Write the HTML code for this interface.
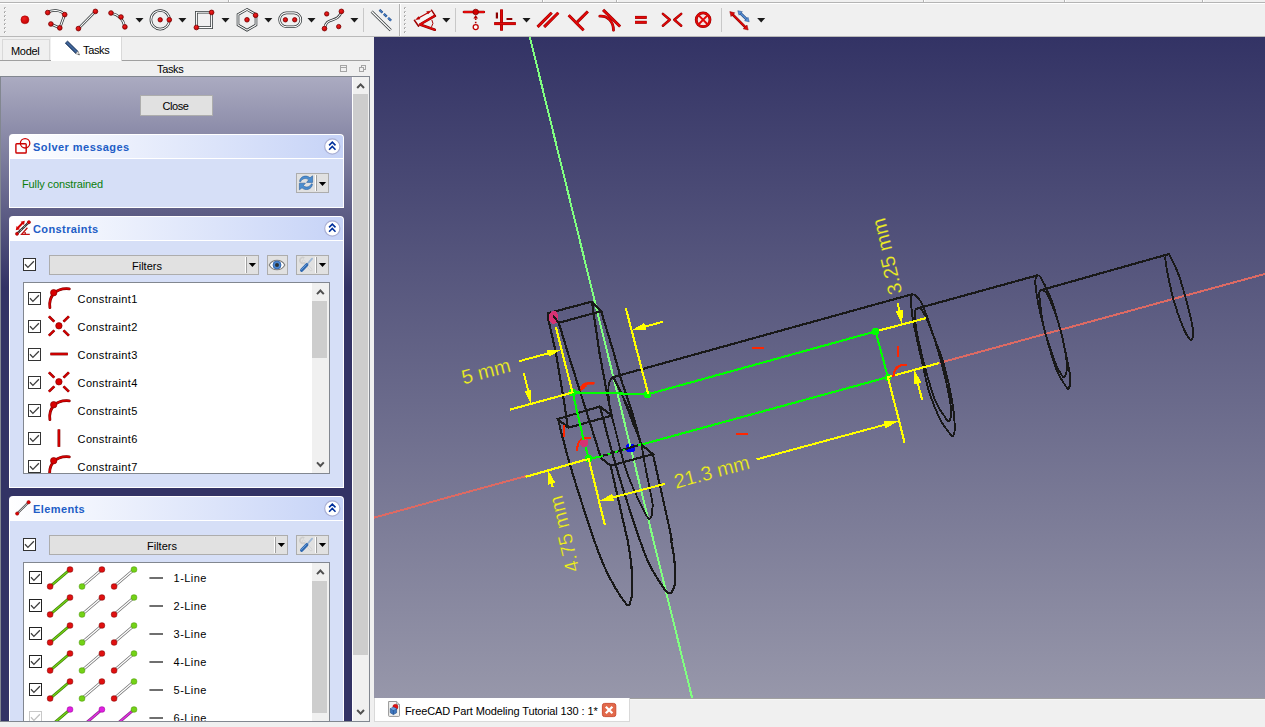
<!DOCTYPE html>
<html>
<head>
<meta charset="utf-8">
<title>FreeCAD</title>
<style>
html,body{margin:0;padding:0;}
body{width:1265px;height:727px;overflow:hidden;background:#f0f0f0;font-family:"Liberation Sans",sans-serif;font-size:11px;color:#000;position:relative;}
.abs{position:absolute;}
.t{position:absolute;white-space:nowrap;line-height:13px;height:13px;}
/* top frame lines */
#topg{left:0;top:2px;width:1265px;height:1px;background:#b4b4b4;}
#topw{left:0;top:3px;width:1265px;height:1px;background:#ffffff;}
.vs{position:absolute;top:0;width:1px;height:2px;background:#b4b4b4;}
.vw{position:absolute;top:0;width:1px;height:2px;background:#ffffff;}
#tbbot{left:0;top:36px;width:1265px;height:1px;background:#b9b9b9;}
/* task panel */
#taskbg{left:1px;top:77px;width:351px;height:644px;background:linear-gradient(to bottom,#ababc1 0px,#333365 210px,#333365 100%);}
.grp{position:absolute;left:9px;width:335px;}
.ghead{position:absolute;left:0;top:0;width:333px;height:23px;border:1px solid #fff;border-bottom:none;border-radius:4px 4px 0 0;background:linear-gradient(to right,#ffffff,#c6d3f7);}
.gcont{position:absolute;left:0;top:24px;width:333px;border:1px solid #fff;background:#d6dff7;}
.gtitle{position:absolute;left:24px;top:7px;font-weight:bold;color:#215dc6;font-size:11px;line-height:13px;white-space:nowrap;}
.btn{position:absolute;background:#e1e1e1;border:1px solid #adadad;box-sizing:border-box;}
.cb{position:absolute;width:13px;height:13px;box-sizing:border-box;border:1px solid #333;background:#fff;}
.list{position:absolute;background:#fff;border:1px solid #828790;box-sizing:border-box;overflow:hidden;}
</style>
</head>
<body>
<!-- top frame -->
<div id="topg" class="abs"></div><div id="topw" class="abs"></div>
<div class="vs" style="left:228px"></div><div class="vw" style="left:229px"></div>
<div class="vs" style="left:542px"></div><div class="vw" style="left:543px"></div>
<div class="vs" style="left:616px"></div><div class="vw" style="left:617px"></div>
<div class="vs" style="left:923px"></div><div class="vw" style="left:924px"></div>
<div class="vs" style="left:1064px"></div><div class="vw" style="left:1065px"></div>
<div class="vs" style="left:1202px"></div><div class="vw" style="left:1203px"></div>
<div id="tbbot" class="abs"></div>

<!-- TOOLBAR -->
<svg id="toolbar" class="abs" style="left:0;top:0" width="800" height="37" viewBox="0 0 800 37">
<defs><radialGradient id="rg" cx="0.4" cy="0.35" r="0.7"><stop offset="0" stop-color="#f02020"/><stop offset="1" stop-color="#c00000"/></radialGradient></defs><rect x="4" y="7" width="2" height="2" fill="#c0c0c0"/><rect x="5" y="8" width="1" height="1" fill="#ffffff"/><rect x="4" y="8" width="1" height="1" fill="#a0a0a0"/><rect x="4" y="11" width="2" height="2" fill="#c0c0c0"/><rect x="5" y="12" width="1" height="1" fill="#ffffff"/><rect x="4" y="12" width="1" height="1" fill="#a0a0a0"/><rect x="4" y="15" width="2" height="2" fill="#c0c0c0"/><rect x="5" y="16" width="1" height="1" fill="#ffffff"/><rect x="4" y="16" width="1" height="1" fill="#a0a0a0"/><rect x="4" y="19" width="2" height="2" fill="#c0c0c0"/><rect x="5" y="20" width="1" height="1" fill="#ffffff"/><rect x="4" y="20" width="1" height="1" fill="#a0a0a0"/><rect x="4" y="23" width="2" height="2" fill="#c0c0c0"/><rect x="5" y="24" width="1" height="1" fill="#ffffff"/><rect x="4" y="24" width="1" height="1" fill="#a0a0a0"/><rect x="4" y="27" width="2" height="2" fill="#c0c0c0"/><rect x="5" y="28" width="1" height="1" fill="#ffffff"/><rect x="4" y="28" width="1" height="1" fill="#a0a0a0"/><rect x="4" y="31" width="2" height="2" fill="#c0c0c0"/><rect x="5" y="32" width="1" height="1" fill="#ffffff"/><rect x="4" y="32" width="1" height="1" fill="#a0a0a0"/><circle cx="24.9" cy="19.8" r="4" fill="url(#rg)" stroke="#a00000" stroke-width="0.5"/><path d="M47.7 12.6 C52 9.5 60 9.5 64.7 14.6 L59.8 27.9 L50.9 24" fill="none" stroke="#2e3436" stroke-width="2.6" stroke-linecap="butt"/><path d="M47.7 12.6 C52 9.5 60 9.5 64.7 14.6 L59.8 27.9 L50.9 24" fill="none" stroke="#ffffff" stroke-width="1.1"/><circle cx="47.7" cy="12.6" r="2.35" fill="url(#rg)" stroke="#7a0000" stroke-width="0.8"/><circle cx="64.7" cy="14.6" r="2.35" fill="url(#rg)" stroke="#7a0000" stroke-width="0.8"/><circle cx="50.9" cy="24" r="2.35" fill="url(#rg)" stroke="#7a0000" stroke-width="0.8"/><circle cx="59.8" cy="27.9" r="2.35" fill="url(#rg)" stroke="#7a0000" stroke-width="0.8"/><path d="M78.4 28.6 L95.4 11.4" fill="none" stroke="#2e3436" stroke-width="2.6" stroke-linecap="butt"/><path d="M78.4 28.6 L95.4 11.4" fill="none" stroke="#ffffff" stroke-width="1.1"/><circle cx="78.4" cy="28.6" r="2.35" fill="url(#rg)" stroke="#7a0000" stroke-width="0.8"/><circle cx="95.4" cy="11.4" r="2.35" fill="url(#rg)" stroke="#7a0000" stroke-width="0.8"/><path d="M111 13 Q122.5 15.5 124.9 26.9" fill="none" stroke="#2e3436" stroke-width="2.6" stroke-linecap="butt"/><path d="M111 13 Q122.5 15.5 124.9 26.9" fill="none" stroke="#ffffff" stroke-width="1.1"/><circle cx="111" cy="13" r="2.35" fill="url(#rg)" stroke="#7a0000" stroke-width="0.8"/><circle cx="121" cy="17" r="2.35" fill="url(#rg)" stroke="#7a0000" stroke-width="0.8"/><circle cx="124.9" cy="26.9" r="2.35" fill="url(#rg)" stroke="#7a0000" stroke-width="0.8"/><path d="M135.5 18 L143.5 18 L139.5 22.4 Z" fill="#1a1a1a"/><circle cx="160.2" cy="19.8" r="9.3" fill="none" stroke="#2e3436" stroke-width="2.6"/><circle cx="160.2" cy="19.8" r="9.3" fill="none" stroke="#fff" stroke-width="1.1"/><circle cx="160.2" cy="19.8" r="2.2" fill="url(#rg)" stroke="#7a0000" stroke-width="0.8"/><circle cx="169.3" cy="19.8" r="2.35" fill="url(#rg)" stroke="#7a0000" stroke-width="0.8"/><path d="M178.4 18 L186.4 18 L182.4 22.4 Z" fill="#1a1a1a"/><path d="M196.4 12.3 L211.6 12.3 L211.6 27.6 L196.4 27.6 Z" fill="none" stroke="#2e3436" stroke-width="2.6" stroke-linecap="butt"/><path d="M196.4 12.3 L211.6 12.3 L211.6 27.6 L196.4 27.6 Z" fill="none" stroke="#ffffff" stroke-width="1.1"/><circle cx="211.6" cy="12.4" r="2.35" fill="url(#rg)" stroke="#7a0000" stroke-width="0.8"/><circle cx="196.4" cy="27.5" r="2.35" fill="url(#rg)" stroke="#7a0000" stroke-width="0.8"/><path d="M221.5 18 L229.5 18 L225.5 22.4 Z" fill="#1a1a1a"/><path d="M247.0 9.4 L256.0 14.6 L256.0 25.0 L247.0 30.2 L238.0 25.0 L238.0 14.6 Z" fill="none" stroke="#2e3436" stroke-width="2.6" stroke-linecap="butt"/><path d="M247.0 9.4 L256.0 14.6 L256.0 25.0 L247.0 30.2 L238.0 25.0 L238.0 14.6 Z" fill="none" stroke="#ffffff" stroke-width="1.1"/><circle cx="247" cy="19.8" r="2.3" fill="url(#rg)" stroke="#7a0000" stroke-width="0.8"/><circle cx="255.6" cy="15.3" r="2.35" fill="url(#rg)" stroke="#7a0000" stroke-width="0.8"/><path d="M264.4 18 L272.4 18 L268.4 22.4 Z" fill="#1a1a1a"/><rect x="279.6" y="12.9" width="21.2" height="13.8" rx="6.9" fill="none" stroke="#2e3436" stroke-width="2.6"/><rect x="279.6" y="12.9" width="21.2" height="13.8" rx="6.9" fill="none" stroke="#fff" stroke-width="1.1"/><circle cx="285.4" cy="19.8" r="2.2" fill="url(#rg)" stroke="#7a0000" stroke-width="0.8"/><circle cx="294.7" cy="19.8" r="2.2" fill="url(#rg)" stroke="#7a0000" stroke-width="0.8"/><path d="M307.5 18 L315.5 18 L311.5 22.4 Z" fill="#1a1a1a"/><path d="M324.5 28.6 C326 16 338 24 341.4 11.4" fill="none" stroke="#2e3436" stroke-width="2.6" stroke-linecap="butt"/><path d="M324.5 28.6 C326 16 338 24 341.4 11.4" fill="none" stroke="#ffffff" stroke-width="1.1"/><circle cx="326.7" cy="13.9" r="2.2" fill="url(#rg)" stroke="#7a0000" stroke-width="0.8"/><circle cx="341.4" cy="11.4" r="2.35" fill="url(#rg)" stroke="#7a0000" stroke-width="0.8"/><circle cx="324.5" cy="28.6" r="2.35" fill="url(#rg)" stroke="#7a0000" stroke-width="0.8"/><circle cx="338.7" cy="26.6" r="2.2" fill="url(#rg)" stroke="#7a0000" stroke-width="0.8"/><path d="M350.4 18 L358.4 18 L354.4 22.4 Z" fill="#1a1a1a"/><rect x="363" y="8" width="1" height="24" fill="#c8c8c8"/><path d="M371.6 11.5 L390.7 30.2" fill="none" stroke="#2e3436" stroke-width="2.8" stroke-linecap="butt"/><path d="M371.6 11.5 L390.7 30.2" fill="none" stroke="#ffffff" stroke-width="1.2999999999999998"/><path d="M379.5 9.9 L392.4 21.9" stroke="#204a87" stroke-width="2.4" stroke-dasharray="4 1.9" fill="none"/><path d="M379.5 9.9 L392.4 21.9" stroke="#4a82c8" stroke-width="1.2" stroke-dasharray="4 1.9" fill="none"/><rect x="399" y="4" width="1" height="32" fill="#b4b4b4"/><rect x="400" y="4" width="1" height="32" fill="#ffffff"/><rect x="404" y="7" width="2" height="2" fill="#c0c0c0"/><rect x="405" y="8" width="1" height="1" fill="#ffffff"/><rect x="404" y="8" width="1" height="1" fill="#a0a0a0"/><rect x="404" y="11" width="2" height="2" fill="#c0c0c0"/><rect x="405" y="12" width="1" height="1" fill="#ffffff"/><rect x="404" y="12" width="1" height="1" fill="#a0a0a0"/><rect x="404" y="15" width="2" height="2" fill="#c0c0c0"/><rect x="405" y="16" width="1" height="1" fill="#ffffff"/><rect x="404" y="16" width="1" height="1" fill="#a0a0a0"/><rect x="404" y="19" width="2" height="2" fill="#c0c0c0"/><rect x="405" y="20" width="1" height="1" fill="#ffffff"/><rect x="404" y="20" width="1" height="1" fill="#a0a0a0"/><rect x="404" y="23" width="2" height="2" fill="#c0c0c0"/><rect x="405" y="24" width="1" height="1" fill="#ffffff"/><rect x="404" y="24" width="1" height="1" fill="#a0a0a0"/><rect x="404" y="27" width="2" height="2" fill="#c0c0c0"/><rect x="405" y="28" width="1" height="1" fill="#ffffff"/><rect x="404" y="28" width="1" height="1" fill="#a0a0a0"/><rect x="404" y="31" width="2" height="2" fill="#c0c0c0"/><rect x="405" y="32" width="1" height="1" fill="#ffffff"/><rect x="404" y="32" width="1" height="1" fill="#a0a0a0"/><path d="M414.4 20.3 L431.5 10.2 L435.5 16.1 L418.6 26.2 Z" fill="#f8f4f4"/><path d="M414.4 20.3 L418.6 26.2 M431.5 10.2 L435.5 16.1" fill="none" stroke="#a00000" stroke-width="1.5" stroke-linecap="round"/><path d="M417.2 18.8 L429.4 11.9" stroke="#b80000" stroke-width="1.2"/><path d="M415.6 19.7 L418.6 16.6 L420 19.1 Z M431 11 L428 14.1 L426.6 11.6 Z" fill="#c80000" stroke="#a00000" stroke-width="0.4"/><path d="M431.8 19.8 Q434.2 23.4 431.5 26.9" fill="none" stroke="#a80000" stroke-width="1.0"/><path d="M434.4 16.1 L419.9 24.5 L434.8 29.7" fill="none" stroke="#8a0000" stroke-width="2.6" stroke-linecap="round" stroke-linejoin="round"/><path d="M434.4 16.1 L419.9 24.5 L434.8 29.7" fill="none" stroke="#e00808" stroke-width="1.7" stroke-linecap="round" stroke-linejoin="round"/><path d="M442.3 18 L450.3 18 L446.3 22.4 Z" fill="#1a1a1a"/><rect x="455" y="8" width="1" height="24" fill="#c8c8c8"/><path d="M464 12 L483.8 12" fill="none" stroke="#8a0000" stroke-width="2.7" stroke-linecap="round" stroke-linejoin="round"/><path d="M464 12 L483.8 12" fill="none" stroke="#e00808" stroke-width="1.8" stroke-linecap="round" stroke-linejoin="round"/><circle cx="475.7" cy="12" r="2.8" fill="#d40000" stroke="#7a0000" stroke-width="0.8"/><path d="M475.7 18.5 L475.7 24.2" stroke="#b00000" stroke-width="1.6" stroke-dasharray="1.6 1.6"/><path d="M473.4 18.4 L475.7 15 L478 18.4 Z" fill="#b00000"/><circle cx="475.7" cy="27.1" r="2.5" fill="#fff" stroke="#c00000" stroke-width="1.3"/><path d="M501.5 9.5 L501.5 30.6" fill="none" stroke="#8a0000" stroke-width="3.0" stroke-linecap="butt" stroke-linejoin="round"/><path d="M501.5 9.5 L501.5 30.6" fill="none" stroke="#e00808" stroke-width="2.1" stroke-linecap="butt" stroke-linejoin="round"/><path d="M494.2 23.6 L515.8 23.6" fill="none" stroke="#8a0000" stroke-width="3.0" stroke-linecap="butt" stroke-linejoin="round"/><path d="M494.2 23.6 L515.8 23.6" fill="none" stroke="#e00808" stroke-width="2.1" stroke-linecap="butt" stroke-linejoin="round"/><path d="M496.9 12.6 L496.9 18.6 M506.5 19 L512.3 19" stroke="#8c0000" stroke-width="2.2"/><path d="M522.5 18 L530.5 18 L526.5 22.4 Z" fill="#1a1a1a"/><path d="M537.6 26.9 L551.7 12.8" fill="none" stroke="#8a0000" stroke-width="3.0" stroke-linecap="butt" stroke-linejoin="round"/><path d="M537.6 26.9 L551.7 12.8" fill="none" stroke="#e00808" stroke-width="2.1" stroke-linecap="butt" stroke-linejoin="round"/><path d="M544.2 26.9 L558.3 12.8" fill="none" stroke="#8a0000" stroke-width="3.0" stroke-linecap="butt" stroke-linejoin="round"/><path d="M544.2 26.9 L558.3 12.8" fill="none" stroke="#e00808" stroke-width="2.1" stroke-linecap="butt" stroke-linejoin="round"/><path d="M568.7 15.3 L583.6 30.2" fill="none" stroke="#8a0000" stroke-width="3.0" stroke-linecap="butt" stroke-linejoin="round"/><path d="M568.7 15.3 L583.6 30.2" fill="none" stroke="#e00808" stroke-width="2.1" stroke-linecap="butt" stroke-linejoin="round"/><path d="M577.4 21.9 L587.8 11.5" fill="none" stroke="#8a0000" stroke-width="3.0" stroke-linecap="butt" stroke-linejoin="round"/><path d="M577.4 21.9 L587.8 11.5" fill="none" stroke="#e00808" stroke-width="2.1" stroke-linecap="butt" stroke-linejoin="round"/><path d="M599.8 16.1 C608 15.5 613.5 22 613.5 30.2" fill="none" stroke="#8a0000" stroke-width="2.8000000000000003" stroke-linecap="round" stroke-linejoin="round"/><path d="M599.8 16.1 C608 15.5 613.5 22 613.5 30.2" fill="none" stroke="#e00808" stroke-width="1.9000000000000001" stroke-linecap="round" stroke-linejoin="round"/><path d="M603.1 9.9 L620.1 26.5" fill="none" stroke="#8a0000" stroke-width="3.0" stroke-linecap="butt" stroke-linejoin="round"/><path d="M603.1 9.9 L620.1 26.5" fill="none" stroke="#e00808" stroke-width="2.1" stroke-linecap="butt" stroke-linejoin="round"/><path d="M635 17.4 L646.7 17.4" fill="none" stroke="#8a0000" stroke-width="3.0" stroke-linecap="butt" stroke-linejoin="round"/><path d="M635 17.4 L646.7 17.4" fill="none" stroke="#e00808" stroke-width="2.1" stroke-linecap="butt" stroke-linejoin="round"/><path d="M635 22.3 L646.7 22.3" fill="none" stroke="#8a0000" stroke-width="3.0" stroke-linecap="butt" stroke-linejoin="round"/><path d="M635 22.3 L646.7 22.3" fill="none" stroke="#e00808" stroke-width="2.1" stroke-linecap="butt" stroke-linejoin="round"/><path d="M662.9 13.9 L669.8 19.8 L662.9 25.7" fill="none" stroke="#8a0000" stroke-width="2.5" stroke-linecap="round" stroke-linejoin="round"/><path d="M662.9 13.9 L669.8 19.8 L662.9 25.7" fill="none" stroke="#e00808" stroke-width="1.5999999999999999" stroke-linecap="round" stroke-linejoin="round"/><path d="M681.2 13.9 L674.3 19.8 L681.2 25.7" fill="none" stroke="#8a0000" stroke-width="2.5" stroke-linecap="round" stroke-linejoin="round"/><path d="M681.2 13.9 L674.3 19.8 L681.2 25.7" fill="none" stroke="#e00808" stroke-width="1.5999999999999999" stroke-linecap="round" stroke-linejoin="round"/><circle cx="703.1" cy="19.8" r="6.9" fill="#f6e6e6" stroke="#8a0000" stroke-width="2.8"/><circle cx="703.1" cy="19.8" r="6.9" fill="none" stroke="#e00808" stroke-width="1.9"/><path d="M698.2 14.9 L708 24.7 M708 14.9 L698.2 24.7" stroke="#e00808" stroke-width="2"/><rect x="721" y="8" width="1" height="24" fill="#c8c8c8"/><path d="M732 13.8 L746 27.8" stroke="#8a0000" stroke-width="2.6" /><path d="M732 13.8 L746 27.8" stroke="#e00808" stroke-width="1.5"/><path d="M729.8 11.6 L734.8 12.8 L731 16.6 Z M748.2 30 L743.2 28.8 L747 25 Z" fill="#e00808" stroke="#8a0000" stroke-width="0.5"/><path d="M739.6 12.5 L747.4 20" stroke="#204a87" stroke-width="2.6"/><path d="M739.6 12.5 L747.4 20" stroke="#5a92d6" stroke-width="1.4"/><path d="M737.8 10.7 L742.4 11.7 L739 15.2 Z M749.2 21.8 L744.6 20.8 L748 17.3 Z" fill="#5a92d6" stroke="#204a87" stroke-width="0.5"/><path d="M757.2 18 L765.2 18 L761.2 22.4 Z" fill="#1a1a1a"/>
</svg>

<!-- LEFT DOCK -->

<!-- tab bar -->
<div class="abs" style="left:0;top:60px;width:370px;height:1px;background:#a0a0a0;"></div>
<div class="abs" style="left:2px;top:39px;width:48px;height:21px;border:1px solid #d9d9d9;border-bottom:none;box-sizing:border-box;background:#f0f0f0;"></div>
<div class="abs" style="left:51px;top:37px;width:71px;height:24px;background:#fff;border-right:1px solid #d9d9d9;box-sizing:border-box;"></div>
<div class="t" id="tModel" style="left:11px;top:45px;letter-spacing:-0.3px;">Model</div>
<div class="t" id="tTasks1" style="left:83px;top:44px;letter-spacing:-0.35px;">Tasks</div>
<svg class="abs" style="left:63px;top:40px" width="18" height="17" viewBox="63 40 18 17">
 <path d="M65.2 43.2 L67.6 41 L78 51.2 L75.6 53.6 Z" fill="#2b4c7e" stroke="#1d3557" stroke-width="0.6"/>
 <path d="M66.6 42.2 L77 52.4" stroke="#5c86bd" stroke-width="0.9" fill="none"/>
 <path d="M75.6 53.6 L78 51.2 L79.6 55 Z" fill="#e8e8e8" stroke="#555" stroke-width="0.5"/>
 <path d="M78.6 53.8 L79.6 55 L78.2 54.6 Z" fill="#222"/>
</svg>
<!-- dock title -->
<div class="t" id="tTasks2" style="left:157px;top:63px;letter-spacing:-0.35px;">Tasks</div>
<svg class="abs" style="left:336px;top:63px" width="34" height="12" viewBox="336 63 34 12">
 <rect x="340.5" y="65.5" width="6" height="6" fill="none" stroke="#a4a4a4" stroke-width="1"/>
 <line x1="340" y1="67.5" x2="347" y2="67.5" stroke="#a4a4a4"/>
 <rect x="361.5" y="65.5" width="4" height="4" fill="#f0f0f0" stroke="#a4a4a4"/>
 <rect x="359.5" y="67.5" width="4" height="4" fill="#f0f0f0" stroke="#a4a4a4"/>
</svg>
<!-- scroll area -->
<div class="abs" style="left:0;top:76px;width:370px;height:646px;background:#828790;"></div>
<div id="taskbg" class="abs"></div>
<!-- main scrollbar -->
<div class="abs" style="left:352px;top:77px;width:17px;height:644px;background:#f0f0f0;"></div><div class="abs" style="left:352px;top:77px;width:1px;height:644px;background:#fff;"></div>
<div class="abs" style="left:353px;top:94px;width:15px;height:561px;background:#cdcdcd;"></div>
<svg class="abs" style="left:352px;top:77px" width="18" height="644" viewBox="352 77 18 644">
 <path d="M357.2 88 L360.6 84.4 L364 88" fill="none" stroke="#505050" stroke-width="2"/>
 <path d="M357.2 710 L360.6 713.6 L364 710" fill="none" stroke="#505050" stroke-width="2"/>
</svg>

<!-- clip for task content -->
<div class="abs" style="left:1px;top:77px;width:351px;height:644px;overflow:hidden;">
<div class="abs" style="left:-1px;top:-77px;width:352px;height:800px;">

<!-- Solver messages -->
<div class="grp" style="top:134px;height:74px;">
 <div class="ghead"></div>
 <div class="gcont" style="height:48px;"></div>
 <div class="gtitle" id="gt1" style="letter-spacing:0.45px;">Solver messages</div>
</div>
<div class="t" id="tFully" style="left:22px;top:178px;color:#0a7d0a;letter-spacing:-0.12px;">Fully constrained</div>
<div class="btn" style="left:296px;top:173px;width:33px;height:20px;"></div>

<!-- Constraints -->
<div class="grp" style="top:216px;height:272px;">
 <div class="ghead"></div>
 <div class="gcont" style="height:246px;"></div>
 <div class="gtitle" id="gt2" style="letter-spacing:0.4px;">Constraints</div>
</div>
<div class="cb" style="left:23px;top:258px;"></div>
<div class="btn" style="left:49px;top:255px;width:210px;height:20px;"></div>
<div class="t" id="tFil1" style="left:132px;top:260px;">Filters</div>
<div class="btn" style="left:267px;top:255px;width:21px;height:20px;"></div>
<div class="btn" style="left:296px;top:255px;width:33px;height:20px;"></div>
<div class="list" id="clist" style="left:23px;top:282px;width:307px;height:192px;">
 <div class="abs" style="left:288px;top:0;width:17px;height:190px;background:#f0f0f0;"></div>
 <div class="abs" style="left:288px;top:18px;width:15px;height:57px;background:#cdcdcd;"></div>
</div>

<!-- Elements -->
<div class="grp" style="top:496px;height:272px;">
 <div class="ghead"></div>
 <div class="gcont" style="height:246px;"></div>
 <div class="gtitle" id="gt3" style="letter-spacing:0.4px;">Elements</div>
</div>
<div class="cb" style="left:23px;top:538px;"></div>
<div class="btn" style="left:49px;top:535px;width:239px;height:20px;"></div>
<div class="t" id="tFil2" style="left:147px;top:540px;">Filters</div>
<div class="btn" style="left:296px;top:535px;width:33px;height:20px;"></div>
<div class="list" id="elist" style="left:23px;top:562px;width:307px;height:192px;">
 <div class="abs" style="left:288px;top:0;width:17px;height:190px;background:#f0f0f0;"></div>
 <div class="abs" style="left:288px;top:18px;width:15px;height:132px;background:#cdcdcd;"></div>
</div>

<!-- PANEL_ITEMS -->

<svg id="pnl" class="abs" style="left:0;top:0" width="352" height="727" viewBox="0 0 352 727">
<rect x="15.9" y="143.8" width="10.3" height="9.2" rx="0.8" fill="none" stroke="#cc0000" stroke-width="1.4"/><circle cx="25.1" cy="143.3" r="4.7" fill="none" stroke="#cc0000" stroke-width="1.3"/><circle cx="332.3" cy="146.5" r="7.6" fill="#ffffff" stroke="#aab0d4" stroke-width="1.2"/><path d="M329.1 145.4 L332.3 142.2 L335.5 145.4 M329.1 149.7 L332.3 146.5 L335.5 149.7" fill="none" stroke="#00309c" stroke-width="1.6"/><circle cx="332.3" cy="228.5" r="7.6" fill="#ffffff" stroke="#aab0d4" stroke-width="1.2"/><path d="M329.1 227.4 L332.3 224.2 L335.5 227.4 M329.1 231.7 L332.3 228.5 L335.5 231.7" fill="none" stroke="#00309c" stroke-width="1.6"/><circle cx="332.3" cy="508.5" r="7.6" fill="#ffffff" stroke="#aab0d4" stroke-width="1.2"/><path d="M329.1 507.4 L332.3 504.2 L335.5 507.4 M329.1 511.7 L332.3 508.5 L335.5 511.7" fill="none" stroke="#00309c" stroke-width="1.6"/><g transform="translate(299,175)"><path d="M0.6 6.6 C0.8 1.2 7.5 -0.6 11 2.8 L13.6 0.8 L13.6 7.4 L7.6 7.4 L9.6 5 C7.6 2.6 3.2 3.2 1.6 6.8 Z" fill="#4b8dd0" stroke="#2c5f9c" stroke-width="0.6"/><path d="M13.4 9 C13.2 14.4 6.5 16.2 3 12.8 L0.4 14.8 L0.4 8.2 L6.4 8.2 L4.4 10.6 C6.4 13 10.8 12.4 12.4 8.8 Z" fill="#4b8dd0" stroke="#2c5f9c" stroke-width="0.6"/></g><rect x="315" y="175" width="1" height="16" fill="#ffffff"/><rect x="316" y="175" width="1" height="16" fill="#a0a0a0"/><path d="M318.9 182 L326.1 182 L322.5 186 Z" fill="#000"/><path d="M17 233.8 L28.9 222.2" stroke="#222" stroke-width="2.2"/><path d="M17 233.8 L28.9 222.2" stroke="#fff" stroke-width="0.9" stroke-dasharray="1 1"/><circle cx="17" cy="233.8" r="1.6" fill="#e00000" stroke="#8a0000" stroke-width="0.5"/><circle cx="28.9" cy="222.2" r="1.6" fill="#e00000" stroke="#8a0000" stroke-width="0.5"/><path d="M17.8 228 L22.8 222.8" stroke="#d40000" stroke-width="2"/><path d="M15.8 230.2 L16.6 226 L20 229.2 Z M24.8 220.8 L24 225 L20.6 221.8 Z" fill="#d40000"/><path d="M29.8 234.3 L21.6 234.3 L27.4 227.8 M25.2 234 Q25.6 231.6 24 231.4" fill="none" stroke="#c01010" stroke-width="1.3"/><path d="M17.2 513.6 L28.6 502.2" stroke="#444" stroke-width="2.1"/><path d="M17.2 513.6 L28.6 502.2" stroke="#fff" stroke-width="0.8"/><circle cx="17.2" cy="513.6" r="1.7" fill="#e00000" stroke="#8a0000" stroke-width="0.5"/><circle cx="28.6" cy="502.2" r="1.7" fill="#e00000" stroke="#8a0000" stroke-width="0.5"/><path d="M25.0 264.3 L27.9 267.4 L33.9 261.3" fill="none" stroke="#3c3c3c" stroke-width="1.3"/><path d="M25.0 544.3 L27.9 547.4 L33.9 541.3" fill="none" stroke="#3c3c3c" stroke-width="1.3"/><rect x="245" y="257" width="1" height="16" fill="#ffffff"/><rect x="246" y="257" width="1" height="16" fill="#a0a0a0"/><path d="M248.8 263 L256.0 263 L252.4 267 Z" fill="#000"/><rect x="274" y="537" width="1" height="16" fill="#ffffff"/><rect x="275" y="537" width="1" height="16" fill="#a0a0a0"/><path d="M277.79999999999995 543 L285.0 543 L281.4 547 Z" fill="#000"/><path d="M269.2 265 C272.6 258.6 281.4 258.6 284.8 265 C281.4 271.4 272.6 271.4 269.2 265 Z" fill="#ffffff" stroke="#7c7c7c" stroke-width="1.1"/><circle cx="277" cy="265" r="4" fill="#4a86d0" stroke="#2c5fa6" stroke-width="0.8"/><circle cx="277" cy="265" r="2" fill="#2e3436"/><g transform="translate(298.5,257)"><path d="M5 4 L12.6 12.8" stroke="#cfcfcf" stroke-width="2.6" stroke-linecap="round"/><path d="M5 4 L12.6 12.8" stroke="#e6e6e6" stroke-width="1.3" stroke-linecap="round"/><path d="M5.8 0.9 A2.9 2.9 0 1 0 6.6 5.2" fill="none" stroke="#cdcdcd" stroke-width="1.7"/><path d="M13.6 1.6 L8.2 7.8" stroke="#9db7d6" stroke-width="1.7" stroke-linecap="round"/><path d="M8.2 7.8 L3.2 13.2" stroke="#2f68b0" stroke-width="3.3" stroke-linecap="round"/><path d="M7.6 7.8 L3 12.6" stroke="#6a9fdb" stroke-width="1" stroke-linecap="round"/></g><rect x="315" y="257" width="1" height="16" fill="#ffffff"/><rect x="316" y="257" width="1" height="16" fill="#a0a0a0"/><path d="M318.9 263 L326.1 263 L322.5 267 Z" fill="#000"/><g transform="translate(298.5,537)"><path d="M5 4 L12.6 12.8" stroke="#cfcfcf" stroke-width="2.6" stroke-linecap="round"/><path d="M5 4 L12.6 12.8" stroke="#e6e6e6" stroke-width="1.3" stroke-linecap="round"/><path d="M5.8 0.9 A2.9 2.9 0 1 0 6.6 5.2" fill="none" stroke="#cdcdcd" stroke-width="1.7"/><path d="M13.6 1.6 L8.2 7.8" stroke="#9db7d6" stroke-width="1.7" stroke-linecap="round"/><path d="M8.2 7.8 L3.2 13.2" stroke="#2f68b0" stroke-width="3.3" stroke-linecap="round"/><path d="M7.6 7.8 L3 12.6" stroke="#6a9fdb" stroke-width="1" stroke-linecap="round"/></g><rect x="315" y="537" width="1" height="16" fill="#ffffff"/><rect x="316" y="537" width="1" height="16" fill="#a0a0a0"/><path d="M318.9 543 L326.1 543 L322.5 547 Z" fill="#000"/><path d="M317 294.1 L320.4 290.5 L323.8 294.1" fill="none" stroke="#505050" stroke-width="2"/><path d="M317 462.4 L320.4 466 L323.8 462.4" fill="none" stroke="#505050" stroke-width="2"/><path d="M317 574.1 L320.4 570.5 L323.8 574.1" fill="none" stroke="#505050" stroke-width="2"/><path d="M317 742.4 L320.4 746 L323.8 742.4" fill="none" stroke="#505050" stroke-width="2"/><clipPath id="cl1"><rect x="24" y="283" width="288" height="190"/></clipPath><g clip-path="url(#cl1)"><rect x="28.5" y="292.5" width="12" height="12" fill="#fff" stroke="#333" stroke-width="1"/><path d="M30.0 298.3 L32.9 301.4 L38.9 295.3" fill="none" stroke="#3c3c3c" stroke-width="1.3"/><path d="M49.9 307.6 C48.4 297 55 287.5 69.3 288.8" fill="none" stroke="#7a0000" stroke-width="2.8" stroke-linecap="round"/><path d="M49.9 307.6 C48.4 297 55 287.5 69.3 288.8" fill="none" stroke="#d40000" stroke-width="1.8" stroke-linecap="round"/><circle cx="53.7" cy="292.7" r="3.2" fill="#d80000" stroke="#8a0000" stroke-width="0.7"/><text x="77.6" y="302.7" font-family="Liberation Sans" font-size="11" letter-spacing="0.34" fill="#000">Constraint1</text><rect x="28.5" y="320.5" width="12" height="12" fill="#fff" stroke="#333" stroke-width="1"/><path d="M30.0 326.3 L32.9 329.4 L38.9 323.3" fill="none" stroke="#3c3c3c" stroke-width="1.3"/><path d="M54.3 321.6 L48.9 316.4" fill="none" stroke="#7a0000" stroke-width="2.7" stroke-linecap="butt"/><path d="M54.3 321.6 L48.9 316.4" fill="none" stroke="#d40000" stroke-width="1.7" stroke-linecap="butt"/><path d="M54.3 330.4 L48.9 335.6" fill="none" stroke="#7a0000" stroke-width="2.7" stroke-linecap="butt"/><path d="M54.3 330.4 L48.9 335.6" fill="none" stroke="#d40000" stroke-width="1.7" stroke-linecap="butt"/><path d="M63.5 321.6 L68.9 316.4" fill="none" stroke="#7a0000" stroke-width="2.7" stroke-linecap="butt"/><path d="M63.5 321.6 L68.9 316.4" fill="none" stroke="#d40000" stroke-width="1.7" stroke-linecap="butt"/><path d="M63.5 330.4 L68.9 335.6" fill="none" stroke="#7a0000" stroke-width="2.7" stroke-linecap="butt"/><path d="M63.5 330.4 L68.9 335.6" fill="none" stroke="#d40000" stroke-width="1.7" stroke-linecap="butt"/><circle cx="58.9" cy="325.8" r="3.2" fill="#d80000" stroke="#8a0000" stroke-width="0.7"/><text x="77.6" y="330.7" font-family="Liberation Sans" font-size="11" letter-spacing="0.34" fill="#000">Constraint2</text><rect x="28.5" y="348.5" width="12" height="12" fill="#fff" stroke="#333" stroke-width="1"/><path d="M30.0 354.3 L32.9 357.4 L38.9 351.3" fill="none" stroke="#3c3c3c" stroke-width="1.3"/><path d="M50.4 354 L67.8 354" fill="none" stroke="#7a0000" stroke-width="2.8" stroke-linecap="butt"/><path d="M50.4 354 L67.8 354" fill="none" stroke="#d40000" stroke-width="1.8" stroke-linecap="butt"/><text x="77.6" y="358.7" font-family="Liberation Sans" font-size="11" letter-spacing="0.34" fill="#000">Constraint3</text><rect x="28.5" y="376.5" width="12" height="12" fill="#fff" stroke="#333" stroke-width="1"/><path d="M30.0 382.3 L32.9 385.4 L38.9 379.3" fill="none" stroke="#3c3c3c" stroke-width="1.3"/><path d="M54.3 377.6 L48.9 372.4" fill="none" stroke="#7a0000" stroke-width="2.7" stroke-linecap="butt"/><path d="M54.3 377.6 L48.9 372.4" fill="none" stroke="#d40000" stroke-width="1.7" stroke-linecap="butt"/><path d="M54.3 386.4 L48.9 391.6" fill="none" stroke="#7a0000" stroke-width="2.7" stroke-linecap="butt"/><path d="M54.3 386.4 L48.9 391.6" fill="none" stroke="#d40000" stroke-width="1.7" stroke-linecap="butt"/><path d="M63.5 377.6 L68.9 372.4" fill="none" stroke="#7a0000" stroke-width="2.7" stroke-linecap="butt"/><path d="M63.5 377.6 L68.9 372.4" fill="none" stroke="#d40000" stroke-width="1.7" stroke-linecap="butt"/><path d="M63.5 386.4 L68.9 391.6" fill="none" stroke="#7a0000" stroke-width="2.7" stroke-linecap="butt"/><path d="M63.5 386.4 L68.9 391.6" fill="none" stroke="#d40000" stroke-width="1.7" stroke-linecap="butt"/><circle cx="58.9" cy="381.8" r="3.2" fill="#d80000" stroke="#8a0000" stroke-width="0.7"/><text x="77.6" y="386.7" font-family="Liberation Sans" font-size="11" letter-spacing="0.34" fill="#000">Constraint4</text><rect x="28.5" y="404.5" width="12" height="12" fill="#fff" stroke="#333" stroke-width="1"/><path d="M30.0 410.3 L32.9 413.4 L38.9 407.3" fill="none" stroke="#3c3c3c" stroke-width="1.3"/><path d="M49.9 419.6 C48.4 409 55 399.5 69.3 400.8" fill="none" stroke="#7a0000" stroke-width="2.8" stroke-linecap="round"/><path d="M49.9 419.6 C48.4 409 55 399.5 69.3 400.8" fill="none" stroke="#d40000" stroke-width="1.8" stroke-linecap="round"/><circle cx="53.7" cy="404.7" r="3.2" fill="#d80000" stroke="#8a0000" stroke-width="0.7"/><text x="77.6" y="414.7" font-family="Liberation Sans" font-size="11" letter-spacing="0.34" fill="#000">Constraint5</text><rect x="28.5" y="432.5" width="12" height="12" fill="#fff" stroke="#333" stroke-width="1"/><path d="M30.0 438.3 L32.9 441.4 L38.9 435.3" fill="none" stroke="#3c3c3c" stroke-width="1.3"/><path d="M58.9 429.4 L58.9 446.8" fill="none" stroke="#7a0000" stroke-width="2.8" stroke-linecap="butt"/><path d="M58.9 429.4 L58.9 446.8" fill="none" stroke="#d40000" stroke-width="1.8" stroke-linecap="butt"/><text x="77.6" y="442.7" font-family="Liberation Sans" font-size="11" letter-spacing="0.34" fill="#000">Constraint6</text><rect x="28.5" y="460.5" width="12" height="12" fill="#fff" stroke="#333" stroke-width="1"/><path d="M30.0 466.3 L32.9 469.4 L38.9 463.3" fill="none" stroke="#3c3c3c" stroke-width="1.3"/><path d="M49.9 475.6 C48.4 465 55 455.5 69.3 456.8" fill="none" stroke="#7a0000" stroke-width="2.8" stroke-linecap="round"/><path d="M49.9 475.6 C48.4 465 55 455.5 69.3 456.8" fill="none" stroke="#d40000" stroke-width="1.8" stroke-linecap="round"/><circle cx="53.7" cy="460.7" r="3.2" fill="#d80000" stroke="#8a0000" stroke-width="0.7"/><text x="77.6" y="470.7" font-family="Liberation Sans" font-size="11" letter-spacing="0.34" fill="#000">Constraint7</text></g><clipPath id="cl2"><rect x="24" y="563" width="288" height="190"/></clipPath><g clip-path="url(#cl2)"><rect x="29.5" y="571.5" width="12" height="12" fill="#fff" stroke="#222" stroke-width="1"/><path d="M31.0 577.3 L33.9 580.4 L39.9 574.3" fill="none" stroke="#3c3c3c" stroke-width="1.3"/><path d="M50.1 586.5 L70.0 569.5" stroke="#3d7a05" stroke-width="2.9"/><path d="M50.1 586.5 L70.0 569.5" stroke="#73d216" stroke-width="1.5"/><rect x="47.300000000000004" y="583.8" width="5.6" height="5.4" rx="2.2" fill="#e01010" stroke="#8a0000" stroke-width="0.6"/><rect x="67.2" y="566.8" width="5.6" height="5.4" rx="2.2" fill="#e01010" stroke="#8a0000" stroke-width="0.6"/><path d="M82 586.5 L101.9 569.5" stroke="#6a6a6a" stroke-width="2.9"/><path d="M82 586.5 L101.9 569.5" stroke="#ffffff" stroke-width="1.5"/><rect x="79.2" y="583.8" width="5.6" height="5.4" rx="2.2" fill="#73d216" stroke="#4e9a06" stroke-width="0.6"/><rect x="99.10000000000001" y="566.8" width="5.6" height="5.4" rx="2.2" fill="#e01010" stroke="#8a0000" stroke-width="0.6"/><path d="M114.1 586.5 L134.0 569.5" stroke="#6a6a6a" stroke-width="2.9"/><path d="M114.1 586.5 L134.0 569.5" stroke="#ffffff" stroke-width="1.5"/><rect x="111.3" y="583.8" width="5.6" height="5.4" rx="2.2" fill="#e01010" stroke="#8a0000" stroke-width="0.6"/><rect x="131.2" y="566.8" width="5.6" height="5.4" rx="2.2" fill="#73d216" stroke="#4e9a06" stroke-width="0.6"/><rect x="149.4" y="577.3" width="13.6" height="1.4" fill="#333"/><text x="173.6" y="581.6" font-family="Liberation Sans" font-size="11" letter-spacing="0.45" fill="#000">1-Line</text><rect x="29.5" y="599.5" width="12" height="12" fill="#fff" stroke="#222" stroke-width="1"/><path d="M31.0 605.3 L33.9 608.4 L39.9 602.3" fill="none" stroke="#3c3c3c" stroke-width="1.3"/><path d="M50.1 614.5 L70.0 597.5" stroke="#3d7a05" stroke-width="2.9"/><path d="M50.1 614.5 L70.0 597.5" stroke="#73d216" stroke-width="1.5"/><rect x="47.300000000000004" y="611.8" width="5.6" height="5.4" rx="2.2" fill="#e01010" stroke="#8a0000" stroke-width="0.6"/><rect x="67.2" y="594.8" width="5.6" height="5.4" rx="2.2" fill="#e01010" stroke="#8a0000" stroke-width="0.6"/><path d="M82 614.5 L101.9 597.5" stroke="#6a6a6a" stroke-width="2.9"/><path d="M82 614.5 L101.9 597.5" stroke="#ffffff" stroke-width="1.5"/><rect x="79.2" y="611.8" width="5.6" height="5.4" rx="2.2" fill="#73d216" stroke="#4e9a06" stroke-width="0.6"/><rect x="99.10000000000001" y="594.8" width="5.6" height="5.4" rx="2.2" fill="#e01010" stroke="#8a0000" stroke-width="0.6"/><path d="M114.1 614.5 L134.0 597.5" stroke="#6a6a6a" stroke-width="2.9"/><path d="M114.1 614.5 L134.0 597.5" stroke="#ffffff" stroke-width="1.5"/><rect x="111.3" y="611.8" width="5.6" height="5.4" rx="2.2" fill="#e01010" stroke="#8a0000" stroke-width="0.6"/><rect x="131.2" y="594.8" width="5.6" height="5.4" rx="2.2" fill="#73d216" stroke="#4e9a06" stroke-width="0.6"/><rect x="149.4" y="605.3" width="13.6" height="1.4" fill="#333"/><text x="173.6" y="609.6" font-family="Liberation Sans" font-size="11" letter-spacing="0.45" fill="#000">2-Line</text><rect x="29.5" y="627.5" width="12" height="12" fill="#fff" stroke="#222" stroke-width="1"/><path d="M31.0 633.3 L33.9 636.4 L39.9 630.3" fill="none" stroke="#3c3c3c" stroke-width="1.3"/><path d="M50.1 642.5 L70.0 625.5" stroke="#3d7a05" stroke-width="2.9"/><path d="M50.1 642.5 L70.0 625.5" stroke="#73d216" stroke-width="1.5"/><rect x="47.300000000000004" y="639.8" width="5.6" height="5.4" rx="2.2" fill="#e01010" stroke="#8a0000" stroke-width="0.6"/><rect x="67.2" y="622.8" width="5.6" height="5.4" rx="2.2" fill="#e01010" stroke="#8a0000" stroke-width="0.6"/><path d="M82 642.5 L101.9 625.5" stroke="#6a6a6a" stroke-width="2.9"/><path d="M82 642.5 L101.9 625.5" stroke="#ffffff" stroke-width="1.5"/><rect x="79.2" y="639.8" width="5.6" height="5.4" rx="2.2" fill="#73d216" stroke="#4e9a06" stroke-width="0.6"/><rect x="99.10000000000001" y="622.8" width="5.6" height="5.4" rx="2.2" fill="#e01010" stroke="#8a0000" stroke-width="0.6"/><path d="M114.1 642.5 L134.0 625.5" stroke="#6a6a6a" stroke-width="2.9"/><path d="M114.1 642.5 L134.0 625.5" stroke="#ffffff" stroke-width="1.5"/><rect x="111.3" y="639.8" width="5.6" height="5.4" rx="2.2" fill="#e01010" stroke="#8a0000" stroke-width="0.6"/><rect x="131.2" y="622.8" width="5.6" height="5.4" rx="2.2" fill="#73d216" stroke="#4e9a06" stroke-width="0.6"/><rect x="149.4" y="633.3" width="13.6" height="1.4" fill="#333"/><text x="173.6" y="637.6" font-family="Liberation Sans" font-size="11" letter-spacing="0.45" fill="#000">3-Line</text><rect x="29.5" y="655.5" width="12" height="12" fill="#fff" stroke="#222" stroke-width="1"/><path d="M31.0 661.3 L33.9 664.4 L39.9 658.3" fill="none" stroke="#3c3c3c" stroke-width="1.3"/><path d="M50.1 670.5 L70.0 653.5" stroke="#3d7a05" stroke-width="2.9"/><path d="M50.1 670.5 L70.0 653.5" stroke="#73d216" stroke-width="1.5"/><rect x="47.300000000000004" y="667.8" width="5.6" height="5.4" rx="2.2" fill="#e01010" stroke="#8a0000" stroke-width="0.6"/><rect x="67.2" y="650.8" width="5.6" height="5.4" rx="2.2" fill="#e01010" stroke="#8a0000" stroke-width="0.6"/><path d="M82 670.5 L101.9 653.5" stroke="#6a6a6a" stroke-width="2.9"/><path d="M82 670.5 L101.9 653.5" stroke="#ffffff" stroke-width="1.5"/><rect x="79.2" y="667.8" width="5.6" height="5.4" rx="2.2" fill="#73d216" stroke="#4e9a06" stroke-width="0.6"/><rect x="99.10000000000001" y="650.8" width="5.6" height="5.4" rx="2.2" fill="#e01010" stroke="#8a0000" stroke-width="0.6"/><path d="M114.1 670.5 L134.0 653.5" stroke="#6a6a6a" stroke-width="2.9"/><path d="M114.1 670.5 L134.0 653.5" stroke="#ffffff" stroke-width="1.5"/><rect x="111.3" y="667.8" width="5.6" height="5.4" rx="2.2" fill="#e01010" stroke="#8a0000" stroke-width="0.6"/><rect x="131.2" y="650.8" width="5.6" height="5.4" rx="2.2" fill="#73d216" stroke="#4e9a06" stroke-width="0.6"/><rect x="149.4" y="661.3" width="13.6" height="1.4" fill="#333"/><text x="173.6" y="665.6" font-family="Liberation Sans" font-size="11" letter-spacing="0.45" fill="#000">4-Line</text><rect x="29.5" y="683.5" width="12" height="12" fill="#fff" stroke="#222" stroke-width="1"/><path d="M31.0 689.3 L33.9 692.4 L39.9 686.3" fill="none" stroke="#3c3c3c" stroke-width="1.3"/><path d="M50.1 698.5 L70.0 681.5" stroke="#3d7a05" stroke-width="2.9"/><path d="M50.1 698.5 L70.0 681.5" stroke="#73d216" stroke-width="1.5"/><rect x="47.300000000000004" y="695.8" width="5.6" height="5.4" rx="2.2" fill="#e01010" stroke="#8a0000" stroke-width="0.6"/><rect x="67.2" y="678.8" width="5.6" height="5.4" rx="2.2" fill="#e01010" stroke="#8a0000" stroke-width="0.6"/><path d="M82 698.5 L101.9 681.5" stroke="#6a6a6a" stroke-width="2.9"/><path d="M82 698.5 L101.9 681.5" stroke="#ffffff" stroke-width="1.5"/><rect x="79.2" y="695.8" width="5.6" height="5.4" rx="2.2" fill="#73d216" stroke="#4e9a06" stroke-width="0.6"/><rect x="99.10000000000001" y="678.8" width="5.6" height="5.4" rx="2.2" fill="#e01010" stroke="#8a0000" stroke-width="0.6"/><path d="M114.1 698.5 L134.0 681.5" stroke="#6a6a6a" stroke-width="2.9"/><path d="M114.1 698.5 L134.0 681.5" stroke="#ffffff" stroke-width="1.5"/><rect x="111.3" y="695.8" width="5.6" height="5.4" rx="2.2" fill="#e01010" stroke="#8a0000" stroke-width="0.6"/><rect x="131.2" y="678.8" width="5.6" height="5.4" rx="2.2" fill="#73d216" stroke="#4e9a06" stroke-width="0.6"/><rect x="149.4" y="689.3" width="13.6" height="1.4" fill="#333"/><text x="173.6" y="693.6" font-family="Liberation Sans" font-size="11" letter-spacing="0.45" fill="#000">5-Line</text><rect x="29.5" y="711.5" width="12" height="12" fill="#fff" stroke="#c8c8c8" stroke-width="1"/><path d="M31.0 717.3 L33.9 720.4 L39.9 714.3" fill="none" stroke="#c0c0c0" stroke-width="1.3"/><path d="M50.1 726.5 L70.0 709.5" stroke="#3d7a05" stroke-width="2.9"/><path d="M50.1 726.5 L70.0 709.5" stroke="#73d216" stroke-width="1.5"/><rect x="47.300000000000004" y="723.8" width="5.6" height="5.4" rx="2.2" fill="#73d216" stroke="#4e9a06" stroke-width="0.6"/><rect x="67.2" y="706.8" width="5.6" height="5.4" rx="2.2" fill="#e020e0" stroke="#a000a0" stroke-width="0.6"/><path d="M82 726.5 L101.9 709.5" stroke="#8a2a8a" stroke-width="2.9"/><path d="M82 726.5 L101.9 709.5" stroke="#e030e0" stroke-width="1.5"/><rect x="79.2" y="723.8" width="5.6" height="5.4" rx="2.2" fill="#73d216" stroke="#4e9a06" stroke-width="0.6"/><rect x="99.10000000000001" y="706.8" width="5.6" height="5.4" rx="2.2" fill="#e020e0" stroke="#a000a0" stroke-width="0.6"/><path d="M114.1 726.5 L134.0 709.5" stroke="#8a2a8a" stroke-width="2.9"/><path d="M114.1 726.5 L134.0 709.5" stroke="#e030e0" stroke-width="1.5"/><rect x="111.3" y="723.8" width="5.6" height="5.4" rx="2.2" fill="#73d216" stroke="#4e9a06" stroke-width="0.6"/><rect x="131.2" y="706.8" width="5.6" height="5.4" rx="2.2" fill="#73d216" stroke="#4e9a06" stroke-width="0.6"/><rect x="149.4" y="717.3" width="13.6" height="1.4" fill="#333"/><text x="173.6" y="721.6" font-family="Liberation Sans" font-size="11" letter-spacing="0.45" fill="#000">6-Line</text><rect x="29.5" y="739.5" width="12" height="12" fill="#fff" stroke="#c8c8c8" stroke-width="1"/><path d="M31.0 745.3 L33.9 748.4 L39.9 742.3" fill="none" stroke="#c0c0c0" stroke-width="1.3"/><path d="M50.1 754.5 L70.0 737.5" stroke="#3d7a05" stroke-width="2.9"/><path d="M50.1 754.5 L70.0 737.5" stroke="#73d216" stroke-width="1.5"/><rect x="47.300000000000004" y="751.8" width="5.6" height="5.4" rx="2.2" fill="#73d216" stroke="#4e9a06" stroke-width="0.6"/><rect x="67.2" y="734.8" width="5.6" height="5.4" rx="2.2" fill="#e020e0" stroke="#a000a0" stroke-width="0.6"/><path d="M82 754.5 L101.9 737.5" stroke="#8a2a8a" stroke-width="2.9"/><path d="M82 754.5 L101.9 737.5" stroke="#e030e0" stroke-width="1.5"/><rect x="79.2" y="751.8" width="5.6" height="5.4" rx="2.2" fill="#73d216" stroke="#4e9a06" stroke-width="0.6"/><rect x="99.10000000000001" y="734.8" width="5.6" height="5.4" rx="2.2" fill="#e020e0" stroke="#a000a0" stroke-width="0.6"/><path d="M114.1 754.5 L134.0 737.5" stroke="#8a2a8a" stroke-width="2.9"/><path d="M114.1 754.5 L134.0 737.5" stroke="#e030e0" stroke-width="1.5"/><rect x="111.3" y="751.8" width="5.6" height="5.4" rx="2.2" fill="#73d216" stroke="#4e9a06" stroke-width="0.6"/><rect x="131.2" y="734.8" width="5.6" height="5.4" rx="2.2" fill="#73d216" stroke="#4e9a06" stroke-width="0.6"/><rect x="149.4" y="745.3" width="13.6" height="1.4" fill="#333"/><text x="173.6" y="749.6" font-family="Liberation Sans" font-size="11" letter-spacing="0.45" fill="#000">7-Line</text></g>
</svg>

</div></div>
<!-- close button -->
<div class="btn" style="left:140px;top:95px;width:73px;height:21px;"></div>
<div class="t" id="tClose" style="left:162.4px;top:100px;letter-spacing:-0.4px;">Close</div>


<!-- 3D VIEW -->
<div id="view" class="abs" style="left:374px;top:37px;width:891px;height:661px;background:linear-gradient(to bottom,#333365,#9797aa);overflow:hidden;">
<svg id="sk" width="891" height="661" viewBox="374 37 891 661" style="position:absolute;left:0;top:0">
<g shape-rendering="crispEdges"><path d="M529.6 36.0 L692.4 699.0" fill="none" stroke="#80ff80" stroke-width="2" /><path d="M373.0 517.9 L526.0 476.1" fill="none" stroke="#dc6a64" stroke-width="2" /><path d="M938.0 363.3 L1266.0 273.6" fill="none" stroke="#dc6a64" stroke-width="2" /><path d="M612.4 377.3 L913.4 293.9" fill="none" stroke="#191919" stroke-width="2.15" /><path d="M916.4 308.7 L1037.9 275.2" fill="none" stroke="#191919" stroke-width="2.15" /><path d="M1040.5 290.3 L1167.9 254.3" fill="none" stroke="#191919" stroke-width="2.15" /><path d="M913.4 293.9 C913.0 294.4 911.5 293.6 911.3 297.0 C911.1 300.4 911.1 307.4 912.0 314.0 C912.9 320.6 914.5 327.8 916.4 336.8 C918.3 345.8 921.4 359.0 923.5 368.0 C925.6 377.0 926.1 382.4 928.9 391.0 C931.7 399.6 936.8 412.6 940.4 419.8 C944.0 427.0 948.3 431.7 950.5 434.3 C952.7 436.9 952.7 437.1 953.4 435.7 C954.1 434.2 955.0 431.6 954.8 425.6 C954.5 419.6 953.8 410.2 951.9 399.6 C950.0 389.0 946.0 371.7 943.3 362.1 C940.6 352.5 938.4 349.2 935.8 342.1 C933.2 335.0 930.4 325.9 927.9 319.2 C925.4 312.4 923.2 305.8 920.8 301.6 C918.4 297.4 914.6 295.2 913.4 293.9" fill="none" stroke="#191919" stroke-width="1.9"/><path d="M916.4 308.7 C916.1 309.4 914.9 309.4 914.9 313.0 C914.9 316.6 914.7 320.8 916.4 330.0 C918.1 339.2 922.1 356.3 925.2 368.0 C928.3 379.7 931.7 391.8 935.0 400.0 C938.3 408.2 942.7 413.4 945.0 417.0 C947.3 420.6 948.0 422.1 949.0 421.3 C950.0 420.5 951.0 416.4 951.0 412.0 C951.0 407.6 950.7 403.5 949.0 395.0 C947.3 386.5 944.1 372.2 941.0 361.0 C937.9 349.8 933.7 336.5 930.5 328.0 C927.3 319.5 924.1 313.0 921.7 309.8 C919.4 306.6 917.3 308.9 916.4 308.7" fill="none" stroke="#191919" stroke-width="1.9"/><path d="M1037.9 275.2 C1037.5 276.1 1035.3 276.1 1035.3 280.5 C1035.3 284.9 1036.3 293.1 1037.9 301.6 C1039.5 310.1 1041.9 320.4 1044.9 331.5 C1047.9 342.6 1052.5 359.0 1055.8 367.9 C1059.1 376.8 1062.8 381.6 1065.0 385.0 C1067.2 388.4 1067.9 389.5 1068.8 388.1 C1069.7 386.7 1070.9 383.3 1070.2 376.6 C1069.5 369.9 1066.1 355.2 1064.5 347.7 C1062.9 340.2 1062.9 339.2 1060.8 331.5 C1058.7 323.8 1055.2 310.4 1052.0 301.6 C1048.8 292.8 1043.8 283.1 1041.4 278.7 C1039.1 274.3 1038.5 275.8 1037.9 275.2" fill="none" stroke="#191919" stroke-width="1.9"/><path d="M1040.5 290.2 C1040.3 291.2 1038.7 289.7 1039.3 296.0 C1039.9 302.3 1041.4 317.0 1044.0 328.0 C1046.6 339.0 1052.2 354.3 1055.0 362.0 C1057.8 369.7 1059.4 371.6 1061.0 374.0 C1062.6 376.4 1063.5 377.9 1064.5 376.6 C1065.5 375.3 1067.1 371.3 1067.0 366.0 C1066.9 360.7 1065.6 352.8 1064.0 345.0 C1062.4 337.2 1060.2 327.8 1057.3 319.2 C1054.4 310.6 1049.5 298.2 1046.7 293.4 C1043.9 288.6 1041.5 290.7 1040.5 290.2" fill="none" stroke="#191919" stroke-width="1.9"/><path d="M1167.9 254.3 C1167.5 254.8 1165.3 254.1 1165.3 257.5 C1165.3 260.9 1166.4 267.6 1167.9 275.0 C1169.4 282.4 1171.8 293.7 1174.2 302.1 C1176.6 310.5 1179.8 319.4 1182.3 325.5 C1184.8 331.6 1187.8 337.1 1189.5 339.0 C1191.2 340.9 1192.3 339.2 1192.8 337.0 C1193.3 334.8 1193.3 331.3 1192.3 325.5 C1191.3 319.7 1189.1 310.5 1186.8 302.1 C1184.5 293.7 1181.5 282.8 1178.7 275.0 C1175.9 267.2 1171.5 258.9 1169.7 255.4 C1167.9 252.0 1168.2 254.5 1167.9 254.3" fill="none" stroke="#191919" stroke-width="1.9"/><path d="M553.5 311.8 L591.9 301.6 L601.1 311.2 L558.8 322.8 L553.0 315.4" fill="none" stroke="#191919" stroke-width="2.15" /><path d="M551.0 312.2 L548.2 313.2 L548.2 318.8 L556.0 353.0 L565.5 411.0 L567.9 427.8" fill="none" stroke="#191919" stroke-width="2.15" /><path d="M558.8 322.8 L567.9 353.0 L586.3 411.0 L600.7 457.3" fill="none" stroke="#191919" stroke-width="2.15" /><path d="M591.9 301.6 L599.5 353.0 L608.3 400.0 L611.8 415.6" fill="none" stroke="#191919" stroke-width="2.15" /><path d="M601.1 311.2 L613.8 353.0 L622.0 382.4 L631.8 411.0 L641.1 444.3" fill="none" stroke="#191919" stroke-width="2.15" /><path d="M567.9 427.8 L558.0 419.0 L599.9 406.5 L611.8 415.6 L567.9 427.8" fill="none" stroke="#191919" stroke-width="2.15" /><path d="M558.0 419.0 C560.0 426.6 564.4 445.8 570.0 464.8 C575.6 483.8 586.1 516.2 591.7 533.0 C597.4 549.8 600.1 556.8 603.9 565.6 C607.6 574.4 610.4 579.5 614.2 586.0 C618.1 592.5 624.2 602.2 627.0 604.6 C629.8 607.0 629.9 602.3 630.8 600.1 C631.6 597.9 632.0 597.0 632.1 591.2 C632.2 585.5 632.1 574.1 631.4 565.6 C630.6 557.1 628.5 545.4 627.6 540.0 C626.7 534.6 628.7 545.4 625.9 533.0 C623.1 520.6 613.1 476.8 610.6 465.6" fill="none" stroke="#191919" stroke-width="2.15"/><path d="M600.1 406.7 C602.7 416.4 609.5 443.8 615.7 464.8 C621.9 485.9 631.9 516.6 637.4 533.0 C642.9 549.4 644.7 554.4 648.7 563.0 C652.7 571.6 658.3 579.8 661.5 584.8 C664.7 589.8 666.0 592.2 667.9 593.1 C669.8 594.0 671.8 592.4 673.0 589.9 C674.2 587.4 675.1 583.5 675.3 578.4 C675.5 573.3 675.0 565.6 674.3 559.2 C673.6 552.8 671.7 544.4 671.1 540.0 C670.5 535.6 673.5 547.3 670.5 533.0 C667.5 518.7 655.8 467.3 652.9 454.2" fill="none" stroke="#191919" stroke-width="2.15"/><path d="M599.6 456.8 L641.1 444.3 L652.9 454.2 L610.6 465.6 L599.6 456.8" fill="none" stroke="#191919" stroke-width="2.15" /><path d="M612.4 377.3 C611.9 378.1 610.1 379.6 609.4 382.0 C608.7 384.4 608.2 387.3 608.4 392.0 C608.5 396.7 609.6 405.3 610.3 410.0 C611.0 414.7 610.2 410.0 612.8 420.0 C615.4 430.0 621.6 456.2 626.1 470.0 C630.6 483.8 636.4 495.1 640.0 503.0 C643.6 510.9 645.9 514.9 647.6 517.4 C649.3 519.9 649.5 518.7 650.2 518.3 C650.9 517.9 651.4 516.7 651.8 515.0 C652.2 513.3 652.3 510.3 652.4 508.0 C652.5 505.7 653.3 507.7 652.2 501.4 C651.1 495.1 647.8 479.5 645.9 470.0 C644.0 460.5 643.2 451.9 641.1 444.3 C639.0 436.7 636.9 433.4 633.5 424.6 C630.1 415.8 623.8 398.8 620.7 391.4 C617.6 384.0 616.4 382.4 615.0 380.0 C613.6 377.6 612.8 377.8 612.4 377.3" fill="none" stroke="#191919" stroke-width="1.8"/><path d="M613.4 377.7 C614.8 380.6 619.3 389.4 622.0 395.0 C624.7 400.6 626.4 403.3 629.4 411.0 C632.4 418.7 638.2 436.0 640.0 441.0" fill="none" stroke="#191919" stroke-width="1.9"/><path d="M555.9 326.9 L572.5 392.8" fill="none" stroke="#ffff00" stroke-width="2.15" /><path d="M625.8 308.2 L648.2 393.9" fill="none" stroke="#ffff00" stroke-width="2.15" /><path d="M519.1 361.2 L548.0 353.4" fill="none" stroke="#ffff00" stroke-width="2" /><path d="M561.5 349.7 L548.9 356.8 L547.0 349.9 Z" fill="#ffff00"/><path d="M662.9 321.8 L645.1 326.6" fill="none" stroke="#ffff00" stroke-width="2" /><path d="M631.6 330.2 L644.2 323.1 L646.1 330.0 Z" fill="#ffff00"/><path d="M572.7 392.5 L509.6 409.7" fill="none" stroke="#ffff00" stroke-width="2.15" /><path d="M587.9 459.0 L525.4 476.9" fill="none" stroke="#ffff00" stroke-width="2.15" /><path d="M523.9 373.1 L528.0 390.4" fill="none" stroke="#ffff00" stroke-width="2" /><path d="M531.3 404.0 L524.5 391.2 L531.5 389.5 Z" fill="#ffff00"/><path d="M552.7 487.1 L551.8 483.7" fill="none" stroke="#ffff00" stroke-width="2" /><path d="M548.2 470.2 L555.3 482.8 L548.3 484.7 Z" fill="#ffff00"/><path d="M588.8 459.1 L604.8 524.8" fill="none" stroke="#ffff00" stroke-width="2.15" /><path d="M887.9 377.1 L904.6 442.6" fill="none" stroke="#ffff00" stroke-width="2.15" /><path d="M664.7 483.9 L613.1 497.4" fill="none" stroke="#ffff00" stroke-width="2" /><path d="M599.6 500.9 L612.2 493.9 L614.1 500.8 Z" fill="#ffff00"/><path d="M756.6 459.4 L884.7 424.8" fill="none" stroke="#ffff00" stroke-width="2" /><path d="M898.2 421.2 L885.6 428.3 L883.7 421.4 Z" fill="#ffff00"/><path d="M875.6 331.4 L925.7 318.2" fill="none" stroke="#ffff00" stroke-width="2.15" /><path d="M887.9 377.1 L938.9 363.1" fill="none" stroke="#ffff00" stroke-width="2.15" /><path d="M897.6 303.2 L899.2 310.5" fill="none" stroke="#ffff00" stroke-width="2" /><path d="M902.3 324.2 L895.7 311.3 L902.8 309.8 Z" fill="#ffff00"/><path d="M922.2 400.0 L917.8 383.3" fill="none" stroke="#ffff00" stroke-width="2" /><path d="M914.2 369.8 L921.3 382.4 L914.3 384.3 Z" fill="#ffff00"/><path d="M572.7 392.5 L600.0 392.8 L647.5 394.4" fill="none" stroke="#00ff00" stroke-width="2.15" /><path d="M647.5 394.4 L875.6 331.4" fill="none" stroke="#00ff00" stroke-width="2.15" /><path d="M875.6 331.4 L887.9 377.1" fill="none" stroke="#00ff00" stroke-width="2.15" /><path d="M887.9 377.1 L642.5 444.3" fill="none" stroke="#00ff00" stroke-width="2.15" /><path d="M641.1 444.3 L600.5 456.6" fill="none" stroke="#00ff00" stroke-width="2" stroke-dasharray="3 5"/><path d="M600.5 456.6 L588.8 458.6" fill="none" stroke="#00ff00" stroke-width="2.15" /><path d="M572.7 392.5 L583.9 441.3 L588.8 458.6" fill="none" stroke="#00ff00" stroke-width="2.15" /><path d="M570.3000000000001 389.1 H575.1 V390.1 H576.1 V394.9 H575.1 V395.9 H570.3000000000001 V394.9 H569.3000000000001 V390.1 H570.3000000000001 Z" fill="#00ff00"/><path d="M645.1 391.0 H649.9 V392.0 H650.9 V396.79999999999995 H649.9 V397.79999999999995 H645.1 V396.79999999999995 H644.1 V392.0 H645.1 Z" fill="#00ff00"/><path d="M873.2 328.0 H878.0 V329.0 H879.0 V333.79999999999995 H878.0 V334.79999999999995 H873.2 V333.79999999999995 H872.2 V329.0 H873.2 Z" fill="#00ff00"/><path d="M885.5 373.70000000000005 H890.3 V374.70000000000005 H891.3 V379.5 H890.3 V380.5 H885.5 V379.5 H884.5 V374.70000000000005 H885.5 Z" fill="#00ff00"/><path d="M586.4 455.20000000000005 H591.1999999999999 V456.20000000000005 H592.1999999999999 V461.0 H591.1999999999999 V462.0 H586.4 V461.0 H585.4 V456.20000000000005 H586.4 Z" fill="#00ff00"/><path d="M569.8 382.0 L572.4 392.4 L564.0 394.9" fill="none" stroke="#ffff00" stroke-width="2.15" /><path d="M644.5 380.0 L648.2 393.9" fill="none" stroke="#ffff00" stroke-width="2.15" /><path d="M893.0 375.7 L887.9 377.1 L889.5 383.4" fill="none" stroke="#ffff00" stroke-width="2" /><path d="M583.0 460.4 L588.8 459.1 L590.0 464.0" fill="none" stroke="#ffff00" stroke-width="2.15" /><path d="M627.4 443.6 H633.8000000000001 V444.6 H634.8000000000001 V451.0 H633.8000000000001 V452.0 H627.4 V451.0 H626.4 V444.6 H627.4 Z" fill="#0000ff"/><path d="M629.4 442.8 L630.5 447.2" fill="none" stroke="#80ff80" stroke-width="2" /><path d="M624.5 449.3 L636.5 445.7" fill="none" stroke="#191919" stroke-width="2.15" /><path d="M580.8 391 L581 386.4 C582 383.8 585 382.4 589 382.2 L594 382.4 L594 384 L589.4 384 C587 384.6 585.6 386 584.6 388.2 Z" fill="#ff2600" stroke="#ff2600" stroke-width="0.6"/><path d="M563.9 425.4 L563.9 436.6" fill="none" stroke="#ff2600" stroke-width="2" /><path d="M577.4 451 C576.8 444 579.6 439 585.6 437.6 L591.2 437.6" fill="none" stroke="#ff2600" stroke-width="2"/><path d="M736.4 434.0 L747.8 434.0" fill="none" stroke="#ff2600" stroke-width="2" /><path d="M752.3 347.7 L764.0 347.7" fill="none" stroke="#ff2600" stroke-width="2" /><path d="M897.9 345.5 L897.9 357.0" fill="none" stroke="#ff2600" stroke-width="2" /><path d="M893.4 376.6 C893.6 369.6 897 365.6 903 364.8 L907.4 365" fill="none" stroke="#ff2600" stroke-width="2.2"/><ellipse cx="553.6" cy="317.5" rx="4.7" ry="6.6" fill="#d63373"/><path d="M553.0 315.4 L558.8 322.8" fill="none" stroke="#191919" stroke-width="2" /><circle cx="584.3" cy="442.8" r="4.2" fill="#d63373"/><path d="M581.4 430.0 L583.6 440.0" fill="none" stroke="#00ff00" stroke-width="2" /></g><text transform="matrix(0.964,-0.264,0.239,0.971,463.5,384.5)" font-family="Liberation Sans" font-size="20" fill="#eeee22" stroke="#555888" stroke-width="0.18" style="shape-rendering:auto;text-rendering:geometricPrecision">5 mm</text><text transform="matrix(0.964,-0.264,0.239,0.971,675.9,488.8)" font-family="Liberation Sans" font-size="20" fill="#eeee22" stroke="#555888" stroke-width="0.18" style="shape-rendering:auto;text-rendering:geometricPrecision">21.3 mm</text><text transform="matrix(-0.226,-0.974,0.964,-0.264,902.3,292.5)" font-family="Liberation Sans" font-size="20" fill="#eeee22" stroke="#555888" stroke-width="0.18" style="shape-rendering:auto;text-rendering:geometricPrecision">3.25 mm</text><text transform="matrix(-0.226,-0.974,0.964,-0.264,579.6,570)" font-family="Liberation Sans" font-size="20" fill="#eeee22" stroke="#555888" stroke-width="0.18" style="shape-rendering:auto;text-rendering:geometricPrecision">4.75 mm</text>
</svg>
</div>

<!-- bottom tab -->
<div class="abs" style="left:630px;top:698px;width:635px;height:1px;background:#a0a0a0;"></div><div class="abs" style="left:630px;top:699px;width:635px;height:1px;background:#f6f6f6;"></div>
<div class="abs" style="left:374px;top:698px;width:256px;height:24px;background:#d9d9d9;"></div>
<div class="abs" style="left:375px;top:698px;width:254px;height:23px;background:#fff;"></div>
<div class="t" id="tDoc" style="left:405px;top:705px;letter-spacing:-0.11px;">FreeCAD Part Modeling Tutorial 130 : 1*</div>
<svg class="abs" style="left:386px;top:699px" width="16" height="20" viewBox="386 699 16 20">
 <path d="M388.6 701.5 L396.6 701.5 L399.5 704.4 L399.5 715.6 Q399.5 716.4 398.7 716.4 L389.4 716.4 Q388.6 716.4 388.6 715.6 Z" fill="#f3f3f1" stroke="#8a8a8a" stroke-width="0.9"/>
 <path d="M396.6 701.5 L396.6 704.4 L399.5 704.4" fill="#dcdcdc" stroke="#8a8a8a" stroke-width="0.7"/>
 <circle cx="395.4" cy="706.9" r="2.6" fill="#e01010" stroke="#a00000" stroke-width="0.4"/>
 <path d="M390.3 708.6 L393.6 707.2 L396.6 708.8 L396.6 712.8 L393.4 714.6 L390.3 712.8 Z" fill="#3f78c0" stroke="#1f4a85" stroke-width="0.6"/>
 <path d="M390.3 708.6 L393.4 710.2 L396.6 708.8 M393.4 710.2 L393.4 714.6" fill="none" stroke="#1f4a85" stroke-width="0.6"/>
 <path d="M390.3 708.6 L393.6 707.2 L396.6 708.8 L393.4 710.2 Z" fill="#6a9fdb"/>
</svg>
<svg class="abs" style="left:601px;top:702px" width="16" height="16" viewBox="601 702 16 16">
 <rect x="602.4" y="703.4" width="13.4" height="13.2" rx="2.2" fill="#e2694a" stroke="#c8462c" stroke-width="0.9"/>
 <path d="M605.8 706.7 L612.4 713.3 M612.4 706.7 L605.8 713.3" stroke="#ffffff" stroke-width="2.3" stroke-linecap="butt"/>
</svg>

</body>
</html>
